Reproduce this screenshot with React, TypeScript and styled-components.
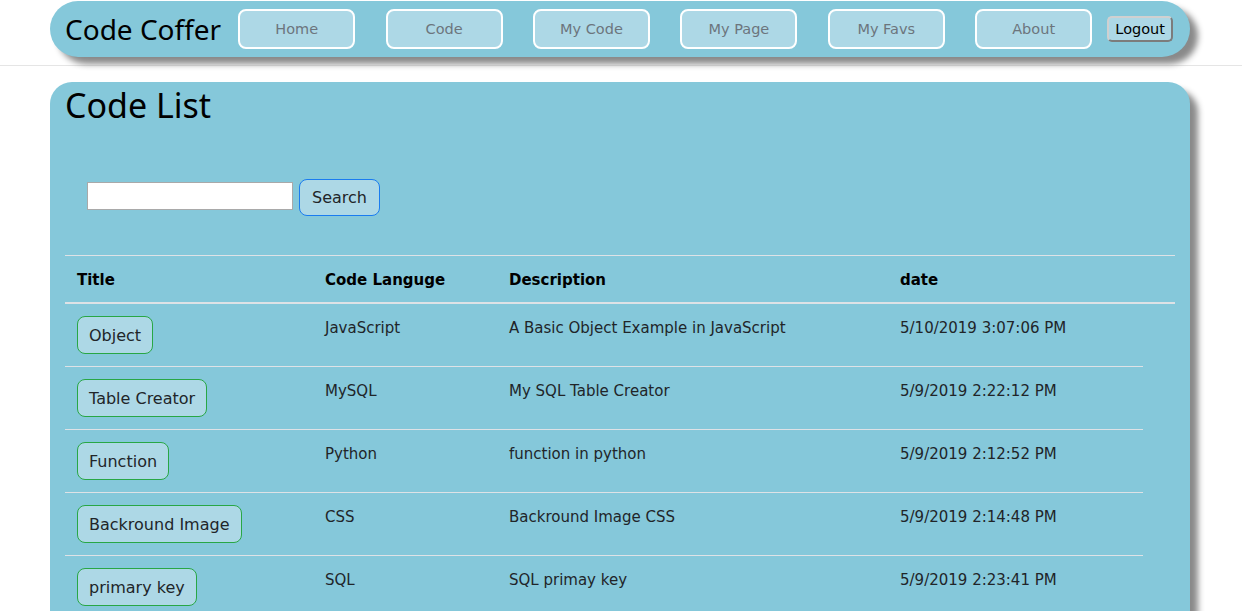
import React from 'react';
import styled, {createGlobalStyle} from 'styled-components';

const Colors = {
  Panel: '#85c8da',
  Button: '#add8e6',
  Rule: '#dee2e6',
  Text: '#212529',
};

const GlobalStyle = createGlobalStyle`
  html, body {
    margin: 0;
    padding: 0;
    background: #ffffff;
  }
  body {
    font-family: "DejaVu Sans", Verdana, sans-serif;
    color: ${Colors.Text};
  }
`;

const Header = styled.header`
  padding: 1px 0 8px;
  border-bottom: 1px solid #e5e5e5;
`;

const NavBar = styled.nav`
  box-sizing: border-box;
  width: 1140px;
  height: 56px;
  margin: 0 0 0 50px;
  padding: 0 16px 0 15px;
  display: flex;
  flex-direction: row;
  align-items: center;
  background-color: ${Colors.Panel};
  border-radius: 28px;
  box-shadow: 8px 7px 6px #8a8a8a;
`;

const Brand = styled.span`
  font-family: "Noto Sans", "Open Sans", sans-serif;
  font-size: 28px;
  color: #000;
  margin-right: 17px;
  white-space: nowrap;
`;

const NavLinks = styled.div`
  display: flex;
  flex-direction: row;
  gap: 30.4px;
`;

const NavButton = styled.button`
  box-sizing: border-box;
  width: 117px;
  height: 40px;
  background-color: ${Colors.Button};
  border: 2px solid #ffffff;
  border-radius: 8px;
  font-family: "DejaVu Sans", Verdana, sans-serif;
  font-size: 14.5px;
  color: #6c757d;
  padding: 0;
`;

const LogoutButton = styled.button`
  box-sizing: border-box;
  margin-left: 15px;
  width: 66px;
  height: 26px;
  padding: 0;
  background-color: ${Colors.Button};
  border: 2px outset #d0d0d0;
  border-radius: 5px;
  font-family: "DejaVu Sans", Verdana, sans-serif;
  font-size: 14.5px;
  color: #000;
`;

const Card = styled.main`
  box-sizing: border-box;
  width: 1140px;
  margin: 16px 0 0 50px;
  padding: 0 15px 40px;
  background-color: ${Colors.Panel};
  border-radius: 22px;
  box-shadow: 8px 8px 6px #8a8a8a;
`;

const Title = styled.h1`
  margin: 0;
  font-family: "Noto Sans", "Open Sans", sans-serif;
  font-weight: 400;
  font-size: 34px;
  line-height: 46px;
  color: #000;
`;

const SearchRow = styled.form`
  display: flex;
  flex-direction: row;
  align-items: center;
  gap: 6px;
  margin: 51px 0 39px 22px;
`;

const SearchInput = styled.input`
  box-sizing: border-box;
  width: 206px;
  height: 28px;
  margin-top: -3px;
  border: 1px solid #a9a9a9;
  background: #fff;
  padding: 2px 4px;
`;

const SearchButton = styled.button`
  box-sizing: border-box;
  width: 81px;
  height: 37px;
  background-color: ${Colors.Button};
  border: 1px solid #1a7cf0;
  border-radius: 8px;
  font-family: "DejaVu Sans", Verdana, sans-serif;
  font-size: 16px;
  color: ${Colors.Text};
  padding: 0;
`;

const columns = '248px 184px 391px 1fr';

const HeadRow = styled.div`
  display: grid;
  grid-template-columns: ${columns};
  border-top: 1px solid ${Colors.Rule};
  border-bottom: 2px solid ${Colors.Rule};
`;

const HeadCell = styled.div`
  padding: 13px 12px 11px;
  font-weight: bold;
  font-size: 15px;
  line-height: 22px;
  color: #000;
`;

const BodyRow = styled.div`
  display: grid;
  width: 1078px;
  grid-template-columns: ${columns};
  border-top: ${(props: {first?: boolean}) => props.first ? 'none' : `1px solid ${Colors.Rule}`};
`;

const Cell = styled.div`
  padding: 13px 12px 11px;
  font-size: 15px;
  line-height: 22px;
`;

const ButtonCell = styled.div`
  padding: 12px;
`;

const CodeButton = styled.button`
  box-sizing: border-box;
  height: 38px;
  padding: 0 11px;
  background-color: ${Colors.Button};
  border: 1px solid #28a745;
  border-radius: 8px;
  font-family: "DejaVu Sans", Verdana, sans-serif;
  font-size: 16px;
  color: ${Colors.Text};
`;

type CodeItem = {
  title: string;
  language: string;
  description: string;
  date: string;
};

const codes: CodeItem[] = [
  {title: 'Object', language: 'JavaScript', description: 'A Basic Object Example in JavaScript', date: '5/10/2019 3:07:06 PM'},
  {title: 'Table Creator', language: 'MySQL', description: 'My SQL Table Creator', date: '5/9/2019 2:22:12 PM'},
  {title: 'Function', language: 'Python', description: 'function in python', date: '5/9/2019 2:12:52 PM'},
  {title: 'Backround Image', language: 'CSS', description: 'Backround Image CSS', date: '5/9/2019 2:14:48 PM'},
  {title: 'primary key', language: 'SQL', description: 'SQL primay key', date: '5/9/2019 2:23:41 PM'},
];

const navItems = ['Home', 'Code', 'My Code', 'My Page', 'My Favs', 'About'];

const App = () => {
  return (
    <>
      <GlobalStyle/>
      <Header>
        <NavBar>
          <Brand>Code Coffer</Brand>
          <NavLinks>
            {navItems.map(item => <NavButton key={item}>{item}</NavButton>)}
          </NavLinks>
          <LogoutButton>Logout</LogoutButton>
        </NavBar>
      </Header>
      <Card>
        <Title>Code List</Title>
        <SearchRow onSubmit={e => e.preventDefault()}>
          <SearchInput type="text"/>
          <SearchButton type="submit">Search</SearchButton>
        </SearchRow>
        <HeadRow>
          <HeadCell>Title</HeadCell>
          <HeadCell>Code Languge</HeadCell>
          <HeadCell>Description</HeadCell>
          <HeadCell>date</HeadCell>
        </HeadRow>
        {codes.map((code, i) => (
          <BodyRow key={code.title} first={i === 0}>
            <ButtonCell><CodeButton>{code.title}</CodeButton></ButtonCell>
            <Cell>{code.language}</Cell>
            <Cell>{code.description}</Cell>
            <Cell>{code.date}</Cell>
          </BodyRow>
        ))}
      </Card>
    </>
  );
};

export default App;
